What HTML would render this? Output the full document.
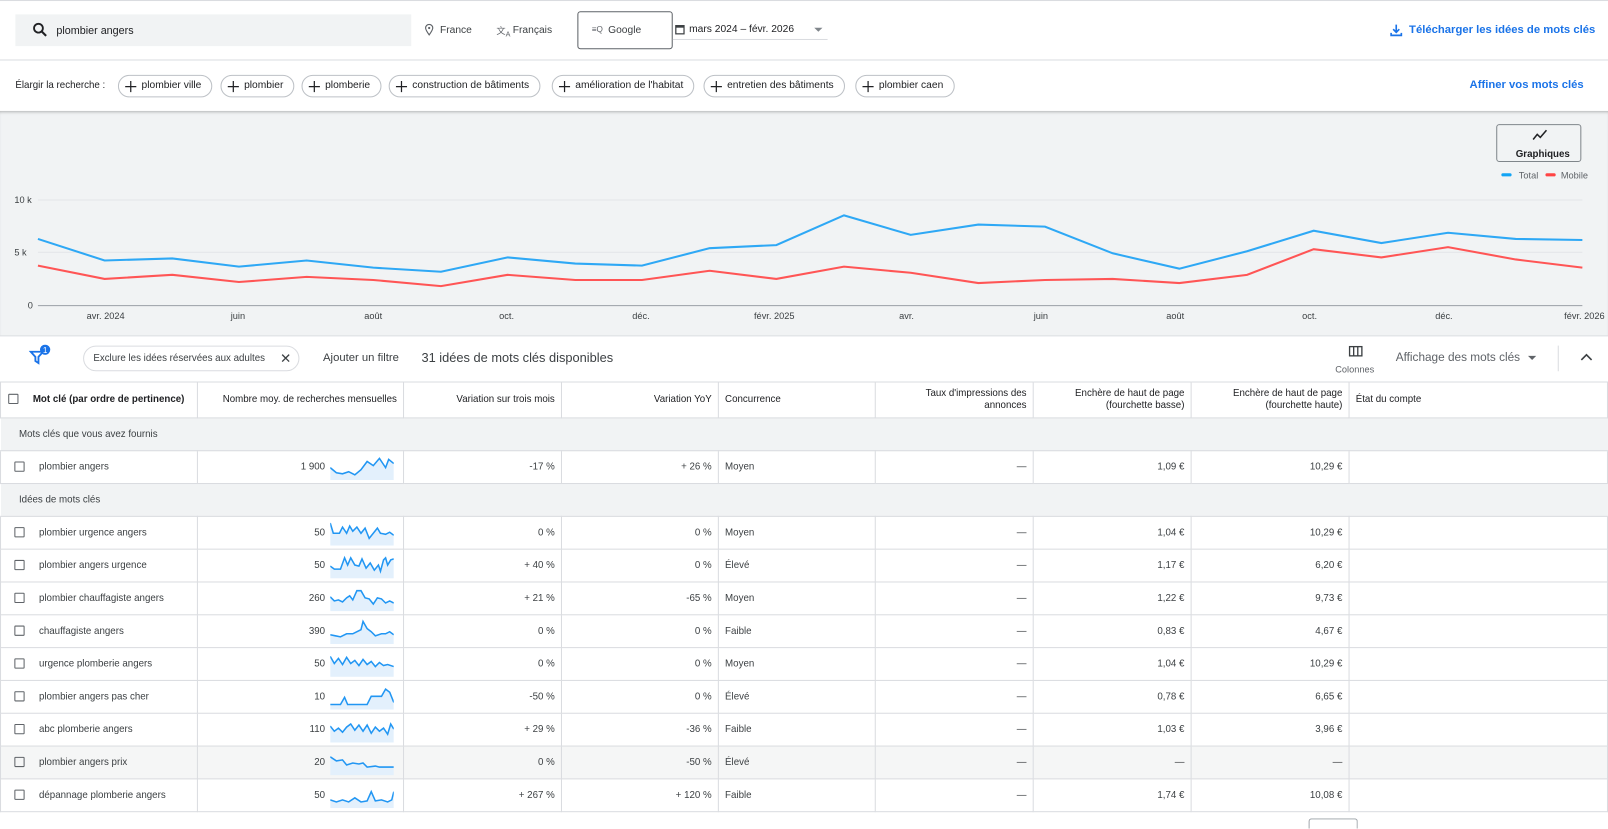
<!DOCTYPE html>
<html><head><meta charset="utf-8"><style>
*{box-sizing:border-box;margin:0;padding:0}
html,body{width:1608px;height:822px;overflow:hidden;background:#fff}
#w{position:absolute;left:0;top:0;width:1568px;height:802px;transform:scale(1.02551);transform-origin:0 0;font-family:"Liberation Sans",sans-serif;color:#3c4043}
.abs{position:absolute}
.chip{position:absolute;top:73px;height:22px;border:1px solid #bdc1c6;border-radius:11px;font-size:10px;line-height:20px;padding:0 10px 0 22px;color:#202124;white-space:nowrap}
.chip svg{position:absolute;left:6px;top:5px}
table{position:absolute;left:0;top:372px;border-collapse:collapse;width:1568px;font-size:9.5px;color:#3c4043}
td,th{border:1px solid #dadce0;padding:0 6px;white-space:nowrap}
th{font-weight:normal;height:35px;text-align:right;color:#202124;line-height:12px}
td{height:32px}
.r{text-align:right}
.g td{background:#f1f3f4;border-left:none;border-right:none;height:32px;color:#3c4043}
.cb{display:inline-block;width:10px;height:10px;border:1.5px solid #5f6368;border-radius:1px;vertical-align:middle;margin:0 14px 0 7px}
.sp{position:relative}
.sp svg{position:absolute;left:129px;top:4px}
.num{position:absolute;right:76px;top:10px}
</style></head><body><div id="w">
<div class="abs" style="left:0;top:0;width:1568px;height:1px;background:#dadce0"></div>
<div class="abs" style="left:15px;top:14px;width:386px;height:31px;background:#f1f3f4"></div>
<svg class="abs" style="left:32px;top:22px" width="14" height="14" viewBox="0 0 14 14"><circle cx="5.5" cy="5.5" r="4.3" fill="none" stroke="#202124" stroke-width="1.8"/><path d="M8.6 8.6L13 13" stroke="#202124" stroke-width="2"/></svg>
<div class="abs" style="left:55px;top:24px;font-size:10.5px;color:#202124">plombier angers</div>
<svg class="abs" style="left:414px;top:23px" width="9" height="12" viewBox="0 0 9 12"><path d="M4.5 11C2 7.5 1 6 1 4.3a3.5 3.5 0 0 1 7 0C8 6 7 7.5 4.5 11z" fill="none" stroke="#5f6368" stroke-width="1.1"/><circle cx="4.5" cy="4.3" r="1.1" fill="#5f6368"/></svg>
<div class="abs" style="left:429px;top:24px;font-size:10px">France</div>
<div class="abs" style="left:484px;top:23px;font-size:9px;color:#5f6368">文<sub style="font-size:7px">A</sub></div>
<div class="abs" style="left:500px;top:24px;font-size:10px">Français</div>
<div class="abs" style="left:563px;top:11px;width:93px;height:37px;border:1px solid #5f6368;border-radius:3px"></div>
<div class="abs" style="left:577px;top:24px;font-size:8px;color:#5f6368">≡Q</div>
<div class="abs" style="left:593px;top:24px;font-size:10px">Google</div>
<svg class="abs" style="left:658px;top:23px" width="10" height="11" viewBox="0 0 10 11"><rect x="1" y="2" width="8" height="8" fill="none" stroke="#3c4043" stroke-width="1.2"/><rect x="1" y="2" width="8" height="2" fill="#3c4043"/></svg>
<div class="abs" style="left:672px;top:23px;font-size:10px;color:#202124">mars 2024 – févr. 2026</div>
<div class="abs" style="left:794px;top:27px;border-left:4px solid transparent;border-right:4px solid transparent;border-top:4px solid #80868b"></div>
<div class="abs" style="left:656px;top:38px;width:151px;height:1px;background:#dadce0"></div>
<svg class="abs" style="left:1355px;top:23px" width="13" height="13" viewBox="0 0 13 13"><path d="M6.5 1v7M3.5 5.5l3 3 3-3M1.5 9v2.5h10V9" fill="none" stroke="#1a73e8" stroke-width="1.6"/></svg>
<div class="abs" style="left:1374px;top:23px;font-size:11px;color:#1a73e8;font-weight:bold">Télécharger les idées de mots clés</div>
<div class="abs" style="left:0;top:58px;width:1568px;height:1px;background:#dadce0"></div>
<div class="abs" style="left:15px;top:78px;font-size:9.5px;color:#202124">Élargir la recherche :</div>
<div class="chip" style="left:115px"><svg width="11" height="11"><path d="M5.5 0v11M0 5.5h11" stroke="#202124" stroke-width="1.2"/></svg>plombier ville</div>
<div class="chip" style="left:215px"><svg width="11" height="11"><path d="M5.5 0v11M0 5.5h11" stroke="#202124" stroke-width="1.2"/></svg>plombier</div>
<div class="chip" style="left:294px"><svg width="11" height="11"><path d="M5.5 0v11M0 5.5h11" stroke="#202124" stroke-width="1.2"/></svg>plomberie</div>
<div class="chip" style="left:379px"><svg width="11" height="11"><path d="M5.5 0v11M0 5.5h11" stroke="#202124" stroke-width="1.2"/></svg>construction de bâtiments</div>
<div class="chip" style="left:538px"><svg width="11" height="11"><path d="M5.5 0v11M0 5.5h11" stroke="#202124" stroke-width="1.2"/></svg>amélioration de l'habitat</div>
<div class="chip" style="left:686px"><svg width="11" height="11"><path d="M5.5 0v11M0 5.5h11" stroke="#202124" stroke-width="1.2"/></svg>entretien des bâtiments</div>
<div class="chip" style="left:834px"><svg width="11" height="11"><path d="M5.5 0v11M0 5.5h11" stroke="#202124" stroke-width="1.2"/></svg>plombier caen</div>
<div class="abs" style="left:1433px;top:77px;font-size:11px;color:#1a73e8;font-weight:bold">Affiner vos mots clés</div>
<div class="abs" style="left:0;top:108px;width:1568px;height:219px;background:#f1f3f4;box-shadow:inset 0 3px 3px -2px rgba(0,0,0,.3)"></div>
<div class="abs" style="left:1459px;top:121px;width:83px;height:37px;border:1px solid #80868b;border-radius:3px"></div>
<svg class="abs" style="left:1494px;top:126px" width="16" height="12" viewBox="0 0 16 12"><path d="M1 10l4-5 3 3 6-7" fill="none" stroke="#202124" stroke-width="1.5"/></svg>
<div class="abs" style="left:1478px;top:145px;font-size:9.5px;font-weight:bold;color:#202124">Graphiques</div>
<div class="abs" style="left:1464px;top:169px;width:10px;height:3px;background:#12a4f5;border-radius:2px"></div>
<div class="abs" style="left:1481px;top:166px;font-size:9px;color:#5f6368">Total</div>
<div class="abs" style="left:1507px;top:169px;width:10px;height:3px;background:#f44;border-radius:2px"></div>
<div class="abs" style="left:1522px;top:166px;font-size:9px;color:#5f6368">Mobile</div>
<svg class="abs" style="left:0;top:0" width="1568" height="327" font-family="Liberation Sans" font-size="9" fill="#3c4043">
<line x1="37" y1="195" x2="1543" y2="195" stroke="#e3e5e8"/>
<line x1="37" y1="246" x2="1543" y2="246" stroke="#e3e5e8"/>
<line x1="37" y1="298" x2="1543" y2="298" stroke="#9aa0a6"/>
<text x="14" y="198">10 k</text><text x="14" y="249">5 k</text><text x="27" y="301">0</text>
<g text-anchor="middle"><text x="103" y="311">avr. 2024</text><text x="232" y="311">juin</text><text x="364" y="311">août</text><text x="494" y="311">oct.</text><text x="625" y="311">déc.</text><text x="755" y="311">févr. 2025</text><text x="884" y="311">avr.</text><text x="1015" y="311">juin</text><text x="1146" y="311">août</text><text x="1277" y="311">oct.</text><text x="1408" y="311">déc.</text><text x="1545" y="311">févr. 2026</text></g>
<polyline fill="none" stroke="#2ea8f5" stroke-width="2" points="37,233 102,254 168,252 233,260 299,254 364,261 430,265 495,251 561,257 626,259 692,242 757,239 823,210 888,229 954,219 1019,221 1085,247 1150,262 1216,245 1281,225 1347,237 1412,227 1478,233 1543,234"/>
<polyline fill="none" stroke="#f55" stroke-width="2" points="37,259 102,272 168,268 233,275 299,270 364,273 430,279 495,268 561,273 626,273 692,264 757,272 823,260 888,266 954,276 1019,273 1085,272 1150,276 1216,268 1281,243 1347,251 1412,241 1478,253 1543,261"/>
</svg>
<svg class="abs" style="left:28px;top:336px" width="22" height="20" viewBox="0 0 22 20"><path d="M2 7h12l-4.5 5v6l-3-2v-4z" fill="none" stroke="#1a73e8" stroke-width="1.8"/><circle cx="16" cy="5" r="5" fill="#1a73e8"/><text x="16" y="8" font-size="8" fill="#fff" text-anchor="middle" font-family="Liberation Sans">1</text></svg>
<div class="abs" style="left:81px;top:337px;width:211px;height:25px;border:1px solid #dadce0;border-radius:13px;font-size:9.5px;line-height:23px;padding-left:9px;color:#3c4043">Exclure les idées réservées aux adultes<span style="position:absolute;right:7px;font-size:13px">✕</span></div>
<div class="abs" style="left:315px;top:343px;font-size:11px;color:#3c4043">Ajouter un filtre</div>
<div class="abs" style="left:411px;top:342px;font-size:12.5px;color:#3c4043">31 idées de mots clés disponibles</div>
<svg class="abs" style="left:1315px;top:337px" width="14" height="11" viewBox="0 0 14 11"><rect x="1" y="1" width="12" height="9" fill="none" stroke="#3c4043" stroke-width="1.3"/><path d="M5 1v9M9 1v9" stroke="#3c4043" stroke-width="1.3"/></svg>
<div class="abs" style="left:1302px;top:355px;font-size:9px;color:#5f6368">Colonnes</div>
<div class="abs" style="left:1361px;top:343px;font-size:11.5px;color:#5f6368">Affichage des mots clés</div>
<div class="abs" style="left:1490px;top:347px;border-left:4px solid transparent;border-right:4px solid transparent;border-top:4px solid #5f6368"></div>
<div class="abs" style="left:1519px;top:337px;width:1px;height:25px;background:#dadce0"></div>
<svg class="abs" style="left:1541px;top:344px" width="12" height="8" viewBox="0 0 12 8"><path d="M1 7l5-5 5 5" fill="none" stroke="#3c4043" stroke-width="1.6"/></svg>
<div class="abs" style="left:0;top:327px;width:1568px;height:1px;background:#dadce0"></div>
<table>
<colgroup><col style="width:192px"><col style="width:201px"><col style="width:154px"><col style="width:153px"><col style="width:153px"><col style="width:154px"><col style="width:154px"><col style="width:154px"><col></colgroup>
<tr><th style="text-align:left;font-weight:bold"><span class="cb" style="margin-left:1px"></span>Mot clé (par ordre de pertinence)</th><th>Nombre moy. de recherches mensuelles</th><th>Variation sur trois mois</th><th>Variation YoY</th><th style="text-align:left">Concurrence</th><th>Taux d'impressions des<br>annonces</th><th>Enchère de haut de page<br>(fourchette basse)</th><th>Enchère de haut de page<br>(fourchette haute)</th><th style="text-align:left">État du compte</th></tr>
<tr class="g"><td colspan="9" style="padding-left:18px">Mots clés que vous avez fournis</td></tr>
<tr><td><span class="cb"></span>plombier angers</td><td class="sp"><span class="num">1 900</span><svg width="62" height="24"><polyline fill="#e3f0fc" stroke="none" points="0,12 6,17 12,18 18,16 24,19 30,14 36,6 42,10 48,3 54,12 57,4 62,8 62,24 0,24"/><polyline fill="none" stroke="#2196f3" stroke-width="1.5" points="0,12 6,17 12,18 18,16 24,19 30,14 36,6 42,10 48,3 54,12 57,4 62,8"/></svg></td><td class="r">-17 %</td><td class="r">+ 26 %</td><td>Moyen</td><td class="r">—</td><td class="r">1,09 €</td><td class="r">10,29 €</td><td></td></tr>
<tr class="g"><td colspan="9" style="padding-left:18px">Idées de mots clés</td></tr>
<tr><td><span class="cb"></span>plombier urgence angers</td><td class="sp"><span class="num">50</span><svg width="62" height="24"><polyline fill="#e3f0fc" points="0,2 3,12 9,12 12,6 16,12 19,5 22,10 26,6 30,12 34,7 38,17 42,12 46,7 49,12 54,13 58,11 62,14 62,24 0,24"/><polyline fill="none" stroke="#2196f3" stroke-width="1.5" points="0,2 3,12 9,12 12,6 16,12 19,5 22,10 26,6 30,12 34,7 38,17 42,12 46,7 49,12 54,13 58,11 62,14"/></svg></td><td class="r">0 %</td><td class="r">0 %</td><td>Moyen</td><td class="r">—</td><td class="r">1,04 €</td><td class="r">10,29 €</td><td></td></tr>
<tr><td><span class="cb"></span>plombier angers urgence</td><td class="sp"><span class="num">50</span><svg width="62" height="24"><polyline fill="#e3f0fc" points="0,12 4,15 10,15 14,4 17,11 20,4 24,11 28,12 31,5 35,14 39,9 43,16 47,11 49,17 52,6 54,4 56,11 59,6 62,5 62,24 0,24"/><polyline fill="none" stroke="#2196f3" stroke-width="1.5" points="0,12 4,15 10,15 14,4 17,11 20,4 24,11 28,12 31,5 35,14 39,9 43,16 47,11 49,17 52,6 54,4 56,11 59,6 62,5"/></svg></td><td class="r">+ 40 %</td><td class="r">0 %</td><td>Élevé</td><td class="r">—</td><td class="r">1,17 €</td><td class="r">6,20 €</td><td></td></tr>
<tr><td><span class="cb"></span>plombier chauffagiste angers</td><td class="sp"><span class="num">260</span><svg width="62" height="24"><polyline fill="#e3f0fc" points="0,10 4,14 8,13 12,15 16,11 19,9 22,13 26,4 30,4 34,11 38,12 42,17 46,11 50,12 54,16 58,14 62,16 62,24 0,24"/><polyline fill="none" stroke="#2196f3" stroke-width="1.5" points="0,10 4,14 8,13 12,15 16,11 19,9 22,13 26,4 30,4 34,11 38,12 42,17 46,11 50,12 54,16 58,14 62,16"/></svg></td><td class="r">+ 21 %</td><td class="r">-65 %</td><td>Moyen</td><td class="r">—</td><td class="r">1,22 €</td><td class="r">9,73 €</td><td></td></tr>
<tr><td><span class="cb"></span>chauffagiste angers</td><td class="sp"><span class="num">390</span><svg width="62" height="24"><polyline fill="#e3f0fc" points="0,15 5,16 10,17 16,14 22,14 30,10 32,2 36,9 40,12 44,16 50,14 54,14 58,12 62,15 62,24 0,24"/><polyline fill="none" stroke="#2196f3" stroke-width="1.5" points="0,15 5,16 10,17 16,14 22,14 30,10 32,2 36,9 40,12 44,16 50,14 54,14 58,12 62,15"/></svg></td><td class="r">0 %</td><td class="r">0 %</td><td>Faible</td><td class="r">—</td><td class="r">0,83 €</td><td class="r">4,67 €</td><td></td></tr>
<tr><td><span class="cb"></span>urgence plomberie angers</td><td class="sp"><span class="num">50</span><svg width="62" height="24"><polyline fill="#e3f0fc" points="0,4 4,11 8,6 12,12 16,5 20,11 24,8 28,13 32,7 36,12 40,9 44,14 48,10 52,13 56,12 62,14 62,24 0,24"/><polyline fill="none" stroke="#2196f3" stroke-width="1.5" points="0,4 4,11 8,6 12,12 16,5 20,11 24,8 28,13 32,7 36,12 40,9 44,14 48,10 52,13 56,12 62,14"/></svg></td><td class="r">0 %</td><td class="r">0 %</td><td>Moyen</td><td class="r">—</td><td class="r">1,04 €</td><td class="r">10,29 €</td><td></td></tr>
<tr><td><span class="cb"></span>plombier angers pas cher</td><td class="sp"><span class="num">10</span><svg width="62" height="24"><polyline fill="#e3f0fc" points="0,19 10,19 14,12 17,19 36,19 40,11 50,11 54,4 58,7 62,17 62,24 0,24"/><polyline fill="none" stroke="#2196f3" stroke-width="1.5" points="0,19 10,19 14,12 17,19 36,19 40,11 50,11 54,4 58,7 62,17"/></svg></td><td class="r">-50 %</td><td class="r">0 %</td><td>Élevé</td><td class="r">—</td><td class="r">0,78 €</td><td class="r">6,65 €</td><td></td></tr>
<tr><td><span class="cb"></span>abc plomberie angers</td><td class="sp"><span class="num">110</span><svg width="62" height="24"><polyline fill="#e3f0fc" points="0,8 4,13 8,10 12,14 16,9 20,6 24,12 28,7 32,13 36,7 40,15 44,9 48,13 52,10 56,16 59,6 62,11 62,24 0,24"/><polyline fill="none" stroke="#2196f3" stroke-width="1.5" points="0,8 4,13 8,10 12,14 16,9 20,6 24,12 28,7 32,13 36,7 40,15 44,9 48,13 52,10 56,16 59,6 62,11"/></svg></td><td class="r">+ 29 %</td><td class="r">-36 %</td><td>Faible</td><td class="r">—</td><td class="r">1,03 €</td><td class="r">3,96 €</td><td></td></tr>
<tr style="background:#f5f6f6"><td><span class="cb"></span>plombier angers prix</td><td class="sp"><span class="num">20</span><svg width="62" height="24"><polyline fill="#e3f0fc" points="0,6 6,10 12,9 16,14 22,12 28,13 32,12 36,16 44,15 48,16 54,16 62,16 62,24 0,24"/><polyline fill="none" stroke="#2196f3" stroke-width="1.5" points="0,6 6,10 12,9 16,14 22,12 28,13 32,12 36,16 44,15 48,16 54,16 62,16"/></svg></td><td class="r">0 %</td><td class="r">-50 %</td><td>Élevé</td><td class="r">—</td><td class="r">—</td><td class="r">—</td><td></td></tr>
<tr><td><span class="cb"></span>dépannage plomberie angers</td><td class="sp"><span class="num">50</span><svg width="62" height="24"><polyline fill="#e3f0fc" points="0,16 6,18 12,16 18,18 24,14 30,18 36,17 40,8 44,17 50,16 56,18 60,16 62,8 62,24 0,24"/><polyline fill="none" stroke="#2196f3" stroke-width="1.5" points="0,16 6,18 12,16 18,18 24,14 30,18 36,17 40,8 44,17 50,16 56,18 60,16 62,8"/></svg></td><td class="r">+ 267 %</td><td class="r">+ 120 %</td><td>Faible</td><td class="r">—</td><td class="r">1,74 €</td><td class="r">10,08 €</td><td></td></tr>
</table>
<div class="abs" style="left:1276px;top:798px;width:48px;height:10px;border:1px solid #9aa0a6;border-bottom:none;border-radius:3px 3px 0 0"></div>
</div></body></html>
